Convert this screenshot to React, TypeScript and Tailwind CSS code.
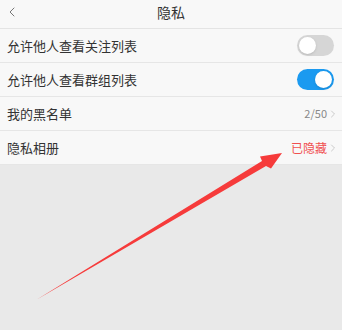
import { ChevronLeft, ChevronRight } from "lucide-react";

const font = { fontFamily: '"Noto Sans CJK SC", "Noto Sans", sans-serif' };

function Toggle({ on }: { on: boolean }) {
  return (
    <div
      className={`w-[37px] h-[21px] rounded-full p-[2px] flex ${
        on ? "bg-[#1b9af0] justify-end" : "bg-[#d6d6d6] justify-start"
      }`}
    >
      <div className="w-[17px] h-[17px] rounded-full bg-white shadow-sm" />
    </div>
  );
}

export default function App() {
  return (
    <div className="relative w-[342px] h-[330px] bg-[#e9e9e9] overflow-hidden" style={font}>
      {/* Header */}
      <div className="h-[29px] bg-[#f8f8f8] border-b border-[#e4e4e4] flex items-center relative">
        <ChevronLeft className="absolute left-[4px] top-[4px] w-[16px] h-[16px] text-[#777]" strokeWidth={1.5} />
        <div className="flex-1 text-center text-[14px] text-[#333] leading-none -mt-[5px]">隐私</div>
      </div>

      {/* Rows */}
      <div className="bg-[#f8f8f8]">
        <div className="h-[34px] border-b border-[#e6e6e6] flex items-center justify-between pl-[7px] pr-[8px]">
          <span className="text-[13px] text-[#333]">允许他人查看关注列表</span>
          <Toggle on={false} />
        </div>
        <div className="h-[34px] border-b border-[#e6e6e6] flex items-center justify-between pl-[7px] pr-[8px]">
          <span className="text-[13px] text-[#333]">允许他人查看群组列表</span>
          <Toggle on />
        </div>
        <div className="h-[34px] border-b border-[#e6e6e6] flex items-center justify-between pl-[7px] pr-[3px]">
          <span className="text-[13px] text-[#333]">我的黑名单</span>
          <div className="flex items-center">
            <span className="text-[11px] text-[#888]">2/50</span>
            <ChevronRight className="w-[12px] h-[12px] text-[#bbb]" strokeWidth={1.5} />
          </div>
        </div>
        <div className="h-[34px] border-b border-[#e6e6e6] flex items-center justify-between pl-[7px] pr-[3px]">
          <span className="text-[13px] text-[#333]">隐私相册</span>
          <div className="flex items-center">
            <span className="text-[12px] text-[#f05050]">已隐藏</span>
            <ChevronRight className="w-[12px] h-[12px] text-[#bbb]" strokeWidth={1.5} />
          </div>
        </div>
      </div>

      {/* Red annotation arrow */}
      <svg className="absolute left-0 top-0 pointer-events-none" width="342" height="330" viewBox="0 0 342 330">
        <polygon
          points="36,300 266,166 271,168.5 282,153 260,156.5 262,161"
          fill="#f63b3b"
        />
      </svg>
    </div>
  );
}
